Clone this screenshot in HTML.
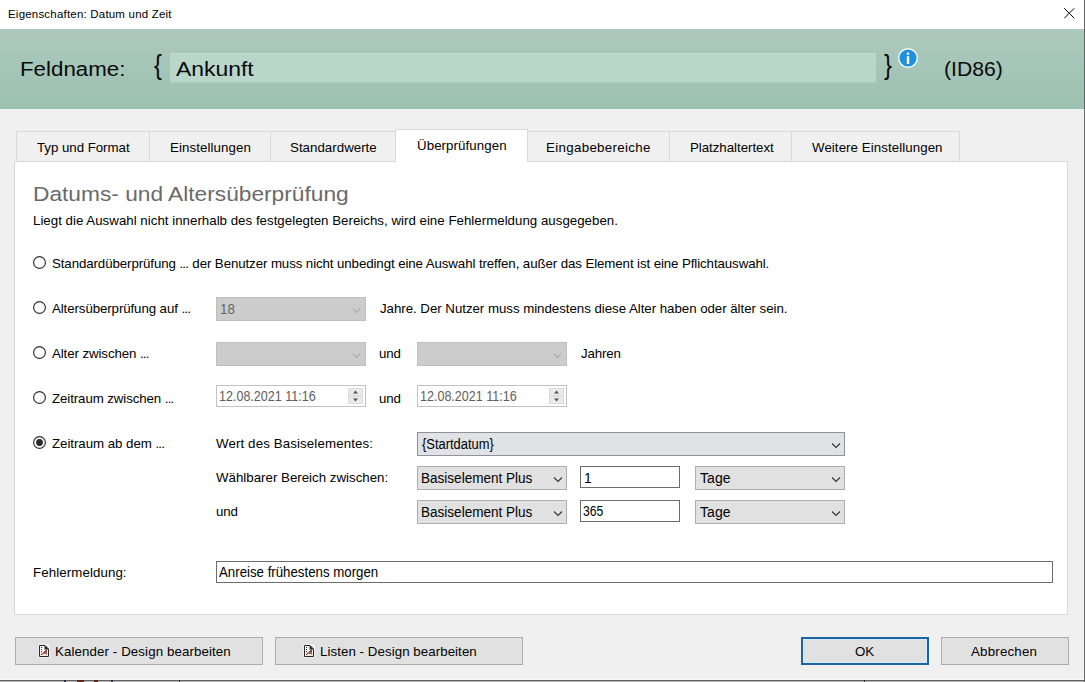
<!DOCTYPE html>
<html><head><meta charset="utf-8">
<style>
html,body{margin:0;padding:0;}
body{width:1085px;height:682px;position:relative;overflow:hidden;background:#f0f0f0;font-family:"Liberation Sans",sans-serif;color:#000;}
.a{position:absolute;}
.t{position:absolute;white-space:nowrap;font-size:13.3px;line-height:13px;}
.d{letter-spacing:-0.8px;}
#title{left:0;top:0;width:1084px;height:29px;background:#fff;}
#hdr{left:0;top:29px;width:1084px;height:80px;background:linear-gradient(#adc9bd,#9bc1b1);}
.big{position:absolute;white-space:nowrap;font-size:20px;line-height:20px;color:#0a0a0a;}
.tab{position:absolute;top:131px;height:30px;background:#f0f0f0;border:1px solid #d9d9d9;border-bottom:none;box-sizing:border-box;}
.tab.sel{top:129px;height:33px;background:#fff;z-index:2;}
#panel{left:14px;top:161px;width:1054px;height:454px;background:#fff;border:1px solid #d9d9d9;box-sizing:border-box;}
.radio{position:absolute;left:33px;width:13px;height:13px;box-sizing:border-box;border:1px solid #333;border-radius:50%;background:#fff;}
.dis{position:absolute;background:#cccccc;border:1px solid #bfbfbf;box-sizing:border-box;}
.combo{position:absolute;background:#e1e1e1;border:1px solid #adadad;box-sizing:border-box;}
.tb{position:absolute;background:#fff;border:1px solid #6c6c6c;box-sizing:border-box;}
.date{position:absolute;background:#fff;border:1px solid #c2c2c2;box-sizing:border-box;}
.btn{position:absolute;top:637px;height:28px;background:#e1e1e1;border:1px solid #adadad;box-sizing:border-box;}
</style></head><body>
<div id="title" class="a"></div>
<div class="t" style="left:8px;top:8.5px;font-size:11.5px;line-height:11.5px;letter-spacing:0.2px;">Eigenschaften: Datum und Zeit</div>
<svg class="a" style="left:1064px;top:8px" width="11" height="11" viewBox="0 0 11 11"><path d="M0.3 0.3L10.2 10.2M10.2 0.3L0.3 10.2" stroke="#000" stroke-width="1"/></svg>
<div class="a" style="left:1084px;top:0;width:1px;height:682px;background:#626262;z-index:5;"></div>
<div id="hdr" class="a"></div>
<div class="big" style="left:19.5px;top:59px;transform:scaleX(1.115);transform-origin:0 0;">Feldname:</div>
<div class="big" style="left:154px;top:51px;font-size:28px;line-height:28px;transform:scaleX(0.85);transform-origin:0 0;">{</div>
<div class="a" style="left:170px;top:53px;width:706px;height:30px;background:#b9d6ca;border-top:1px solid #c2ddd1;border-bottom:1px solid #abcbbd;box-sizing:border-box;"></div>
<div class="big" style="left:176px;top:59px;transform:scaleX(1.146);transform-origin:0 0;">Ankunft</div>
<div class="big" style="left:883.5px;top:51px;font-size:28px;line-height:28px;transform:scaleX(0.85);transform-origin:0 0;">}</div>
<svg class="a" style="left:897px;top:47px" width="22" height="22" viewBox="0 0 22 22"><circle cx="11" cy="11" r="10" fill="#f4fcff"/><circle cx="11" cy="11" r="8.6" fill="#1f90de"/><rect x="9.8" y="9.2" width="2.4" height="7.8" fill="#fff"/><rect x="9.8" y="5.4" width="2.4" height="2.4" rx="0.6" fill="#fff"/></svg>
<div class="big" style="left:944px;top:59px;transform:scaleX(1.06);transform-origin:0 0;">(ID86)</div>
<div id="panel" class="a"></div>
<div class="tab" style="left:16px;width:134px;"></div>
<div class="tab" style="left:149px;width:122px;"></div>
<div class="tab" style="left:270px;width:126px;"></div>
<div class="tab" style="left:527px;width:143px;"></div>
<div class="tab" style="left:669px;width:123px;"></div>
<div class="tab" style="left:791px;width:169px;"></div>
<div class="tab sel" style="left:395px;width:133px;"></div>
<div class="t" style="left:37px;top:141px;letter-spacing:-0.04px;">Typ und Format</div>
<div class="t" style="left:170px;top:141px;letter-spacing:0.08px;">Einstellungen</div>
<div class="t" style="left:290px;top:141px;letter-spacing:0.02px;">Standardwerte</div>
<div class="t" style="left:417px;top:139px;letter-spacing:0.07px;z-index:3;">Überprüfungen</div>
<div class="t" style="left:546px;top:141px;letter-spacing:0.33px;">Eingabebereiche</div>
<div class="t" style="left:690px;top:141px;letter-spacing:-0.04px;">Platzhaltertext</div>
<div class="t" style="left:812px;top:141px;letter-spacing:0.07px;">Weitere Einstellungen</div>
<div class="big" style="left:33px;top:183.5px;font-size:20.5px;line-height:20.5px;color:#6a6a6a;transform:scaleX(1.108);transform-origin:0 0;">Datums- und Altersüberprüfung</div>
<div class="t" style="left:33px;top:214px;letter-spacing:0.01px;">Liegt die Auswahl nicht innerhalb des festgelegten Bereichs, wird eine Fehlermeldung ausgegeben.</div>
<svg class="a" style="left:33px;top:256px" width="13" height="13"><circle cx="6.5" cy="6.5" r="5.9" fill="#fff" stroke="#333" stroke-width="1.2"/></svg>
<div class="t" style="left:52px;top:257px;letter-spacing:-0.1px;">Standardüberprüfung <span class="d">..</span>. der Benutzer muss nicht unbedingt eine Auswahl treffen, außer das Element ist eine Pflichtauswahl.</div>
<svg class="a" style="left:33px;top:301px" width="13" height="13"><circle cx="6.5" cy="6.5" r="5.9" fill="#fff" stroke="#333" stroke-width="1.2"/></svg>
<div class="t" style="left:52px;top:302px;letter-spacing:-0.1px;">Altersüberprüfung auf <span class="d">..</span>.</div>
<div class="dis" style="left:216px;top:297px;width:150px;height:24px;"></div>
<div class="t" style="left:220px;top:302px;transform:scaleX(0.95);transform-origin:0 0;font-size:14px;line-height:14px;color:#666;">18</div>
<svg class="a" style="left:352px;top:306.5px" width="9" height="7"><path d="M1 1.5L4.5 5.5L8 1.5" fill="none" stroke="#a6a6a6" stroke-width="1.1"/></svg>
<div class="t" style="left:380px;top:302px;letter-spacing:-0.04px;">Jahre. Der Nutzer muss mindestens diese Alter haben oder älter sein.</div>
<svg class="a" style="left:33px;top:346px" width="13" height="13"><circle cx="6.5" cy="6.5" r="5.9" fill="#fff" stroke="#333" stroke-width="1.2"/></svg>
<div class="t" style="left:52px;top:347px;letter-spacing:-0.1px;">Alter zwischen <span class="d">..</span>.</div>
<div class="dis" style="left:216px;top:342px;width:150px;height:24px;"></div>
<svg class="a" style="left:352px;top:351.5px" width="9" height="7"><path d="M1 1.5L4.5 5.5L8 1.5" fill="none" stroke="#a6a6a6" stroke-width="1.1"/></svg>
<div class="t" style="left:379px;top:347px;letter-spacing:-0.2px;">und</div>
<div class="dis" style="left:417px;top:342px;width:150px;height:24px;"></div>
<svg class="a" style="left:553px;top:351.5px" width="9" height="7"><path d="M1 1.5L4.5 5.5L8 1.5" fill="none" stroke="#a6a6a6" stroke-width="1.1"/></svg>
<div class="t" style="left:581px;top:347px;letter-spacing:-0.17px;">Jahren</div>
<svg class="a" style="left:33px;top:391px" width="13" height="13"><circle cx="6.5" cy="6.5" r="5.9" fill="#fff" stroke="#333" stroke-width="1.2"/></svg>
<div class="t" style="left:52px;top:392px;letter-spacing:-0.1px;">Zeitraum zwischen <span class="d">..</span>.</div>
<div class="date" style="left:216px;top:385px;width:150px;height:22px;"></div>
<div class="t" style="left:218.5px;top:389px;transform:scaleX(0.895);transform-origin:0 0;font-size:14px;line-height:14px;color:#5e5e5e;">12.08.2021 11:16</div>
<div class="a" style="left:348px;top:388px;width:15px;height:16px;background:#e9e9e9;border:1px solid #dcdcdc;box-sizing:border-box;"></div>
<svg class="a" style="left:348px;top:388px" width="15" height="17"><path d="M5 5.5L7.5 2.5L10 5.5Z" fill="#555"/><path d="M5 10.5L7.5 13.5L10 10.5Z" fill="#555"/><line x1="2" y1="8" x2="13" y2="8" stroke="#d6d6d6"/></svg>
<div class="t" style="left:379px;top:392px;letter-spacing:-0.2px;">und</div>
<div class="date" style="left:417px;top:385px;width:150px;height:22px;"></div>
<div class="t" style="left:419.5px;top:389px;transform:scaleX(0.895);transform-origin:0 0;font-size:14px;line-height:14px;color:#5e5e5e;">12.08.2021 11:16</div>
<div class="a" style="left:549px;top:388px;width:15px;height:16px;background:#e9e9e9;border:1px solid #dcdcdc;box-sizing:border-box;"></div>
<svg class="a" style="left:549px;top:388px" width="15" height="17"><path d="M5 5.5L7.5 2.5L10 5.5Z" fill="#555"/><path d="M5 10.5L7.5 13.5L10 10.5Z" fill="#555"/><line x1="2" y1="8" x2="13" y2="8" stroke="#d6d6d6"/></svg>
<svg class="a" style="left:33px;top:436px" width="13" height="13"><circle cx="6.5" cy="6.5" r="5.9" fill="#fff" stroke="#333" stroke-width="1.2"/></svg>
<svg class="a" style="left:33px;top:436px" width="13" height="13"><circle cx="6.5" cy="6.5" r="3.4" fill="#2a2a2a"/></svg>
<div class="t" style="left:52px;top:437px;letter-spacing:-0.05px;">Zeitraum ab dem <span class="d">..</span>.</div>
<div class="t" style="left:216px;top:437px;letter-spacing:0.12px;">Wert des Basiselementes:</div>
<div class="combo" style="left:417px;top:432px;width:428px;height:24px;background:#e0e2e5;border-color:#8f9296;"></div>
<div class="t" style="left:422px;top:437px;transform:scaleX(0.923);transform-origin:0 0;font-size:14px;line-height:14px;">{Startdatum}</div>
<svg class="a" style="left:831px;top:442px" width="10" height="7"><path d="M1 1.5L5.0 5.5L9 1.5" fill="none" stroke="#333" stroke-width="1.1"/></svg>
<div class="t" style="left:216px;top:471px;">Wählbarer Bereich zwischen:</div>
<div class="combo" style="left:417px;top:466px;width:150px;height:24px;"></div>
<div class="t" style="left:421px;top:471px;transform:scaleX(0.967);transform-origin:0 0;font-size:14px;line-height:14px;">Basiselement Plus</div>
<svg class="a" style="left:553px;top:476px" width="10" height="7"><path d="M1 1.5L5.0 5.5L9 1.5" fill="none" stroke="#333" stroke-width="1.1"/></svg>
<div class="tb" style="left:580px;top:466px;width:100px;height:22px;"></div>
<div class="t" style="left:584px;top:471px;font-size:14px;line-height:14px;">1</div>
<div class="combo" style="left:695px;top:466px;width:150px;height:24px;"></div>
<div class="t" style="left:700px;top:471px;font-size:14px;line-height:14px;letter-spacing:0.08px;">Tage</div>
<svg class="a" style="left:831px;top:476px" width="10" height="7"><path d="M1 1.5L5.0 5.5L9 1.5" fill="none" stroke="#333" stroke-width="1.1"/></svg>
<div class="t" style="left:216px;top:505px;letter-spacing:-0.2px;">und</div>
<div class="combo" style="left:417px;top:500px;width:150px;height:24px;"></div>
<div class="t" style="left:421px;top:505px;transform:scaleX(0.967);transform-origin:0 0;font-size:14px;line-height:14px;">Basiselement Plus</div>
<svg class="a" style="left:553px;top:510px" width="10" height="7"><path d="M1 1.5L5.0 5.5L9 1.5" fill="none" stroke="#333" stroke-width="1.1"/></svg>
<div class="tb" style="left:580px;top:500px;width:100px;height:22px;"></div>
<div class="t" style="left:583px;top:504px;transform:scaleX(0.87);transform-origin:0 0;font-size:14px;line-height:14px;">365</div>
<div class="combo" style="left:695px;top:500px;width:150px;height:24px;"></div>
<div class="t" style="left:700px;top:505px;font-size:14px;line-height:14px;letter-spacing:0.08px;">Tage</div>
<svg class="a" style="left:831px;top:510px" width="10" height="7"><path d="M1 1.5L5.0 5.5L9 1.5" fill="none" stroke="#333" stroke-width="1.1"/></svg>
<div class="t" style="left:33px;top:566px;letter-spacing:0.09px;">Fehlermeldung:</div>
<div class="tb" style="left:216px;top:561px;width:837px;height:22px;"></div>
<div class="t" style="left:219px;top:565px;transform:scaleX(0.947);transform-origin:0 0;font-size:14px;line-height:14px;">Anreise frühestens morgen</div>
<div class="btn" style="left:15px;width:248px;"></div>
<svg class="a" style="left:38px;top:644px" width="12" height="14" viewBox="0 0 12 14"><rect x="0" y="0" width="12" height="14" rx="2" fill="#fafafa" opacity="0.6"/><path d="M1.5 1.5H7L10.5 5V12.5H1.5Z" fill="#fff" stroke="#262626" stroke-width="1"/><path d="M6.5 1V5.5H11Z" fill="#2a2a2a"/><rect x="3" y="3" width="1" height="1" fill="#222"/><rect x="3" y="5" width="1" height="1" fill="#222"/><rect x="3" y="7" width="1" height="1" fill="#222"/><rect x="3" y="10" width="1" height="1" fill="#3a1a12"/><path d="M3.5 10.6L8.3 6.3V10.6M5.2 9.1H8.3" stroke="#6a2e20" stroke-width="1.1" fill="none"/><rect x="2" y="8" width="8" height="4" fill="#e9a48f" opacity="0.25"/></svg>
<div class="t" style="left:55px;top:645px;letter-spacing:0.1px;">Kalender - Design bearbeiten</div>
<div class="btn" style="left:275px;width:248px;"></div>
<svg class="a" style="left:303px;top:644px" width="12" height="14" viewBox="0 0 12 14"><rect x="0" y="0" width="12" height="14" rx="2" fill="#fafafa" opacity="0.6"/><path d="M1.5 1.5H7L10.5 5V12.5H1.5Z" fill="#fff" stroke="#262626" stroke-width="1"/><path d="M6.5 1V5.5H11Z" fill="#2a2a2a"/><rect x="3" y="3" width="1" height="1" fill="#222"/><rect x="3" y="5" width="1" height="1" fill="#222"/><rect x="3" y="7" width="1" height="1" fill="#222"/><rect x="3" y="10" width="1" height="1" fill="#3a1a12"/><path d="M3.5 10.6L8.3 6.3V10.6M5.2 9.1H8.3" stroke="#6a2e20" stroke-width="1.1" fill="none"/><rect x="2" y="8" width="8" height="4" fill="#e9a48f" opacity="0.25"/></svg>
<div class="t" style="left:320px;top:645px;letter-spacing:0.06px;">Listen - Design bearbeiten</div>
<div class="btn" style="left:801px;width:128px;border:2px solid #1d63a3;box-shadow:inset 0 0 0 1px #d3eefb;"></div>
<div class="t" style="left:855px;top:645px;">OK</div>
<div class="btn" style="left:941px;width:128px;"></div>
<div class="t" style="left:971px;top:645px;letter-spacing:0.2px;">Abbrechen</div>
<div class="a" style="left:0;top:679px;width:1084px;height:1px;background:#f8f8f8;"></div>
<div class="a" style="left:1083px;top:109px;width:1px;height:571px;background:#f8f8f8;"></div>
<div class="a" style="left:0;top:680px;width:1085px;height:1px;background:#606060;"></div>
<div class="a" style="left:0;top:681px;width:1085px;height:1px;background:#b8b8b8;"></div>
<div class="a" style="left:64px;top:680px;width:2px;height:2px;background:#2a2a3a;"></div>
<div class="a" style="left:111px;top:680px;width:2px;height:2px;background:#2a2a3a;"></div>
<div class="a" style="left:179px;top:680px;width:1px;height:2px;background:#2a2a3a;"></div>
<div class="a" style="left:77px;top:680px;width:7px;height:2px;background:#5a2416;"></div>
<div class="a" style="left:94px;top:680px;width:4px;height:2px;background:#5a2416;"></div>
<div class="a" style="left:864px;top:680px;width:1px;height:2px;background:#2a2a2a;"></div>
</body></html>
